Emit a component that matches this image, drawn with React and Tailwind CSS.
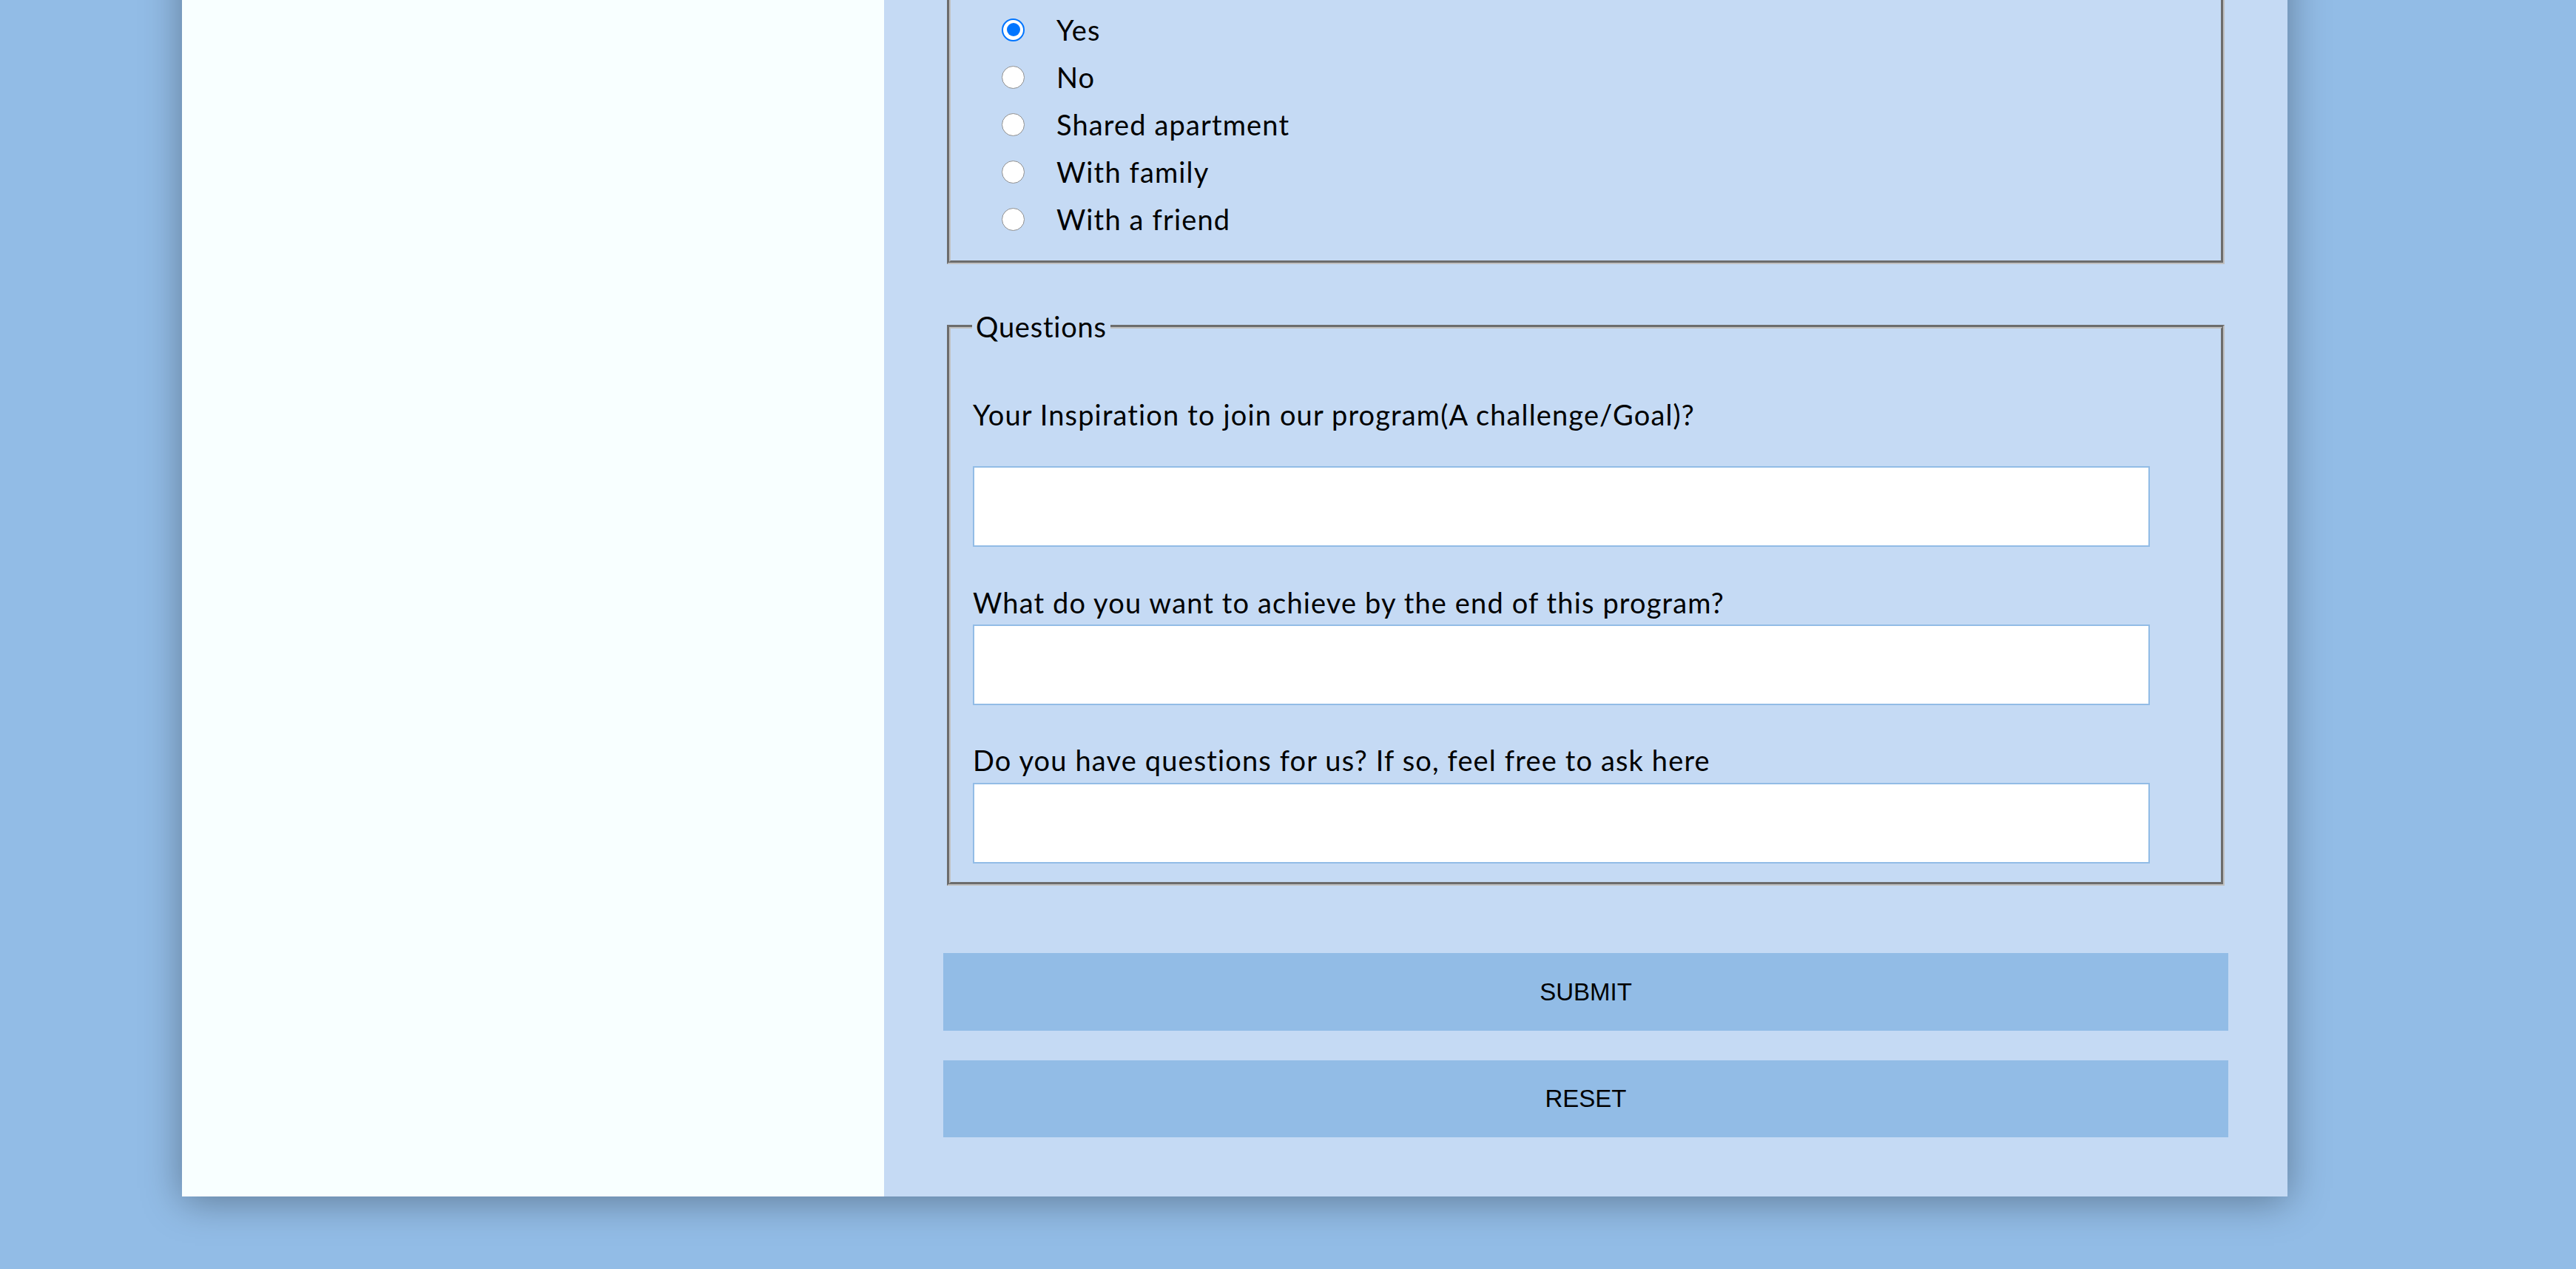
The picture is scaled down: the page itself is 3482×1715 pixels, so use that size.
import React, { useState } from "react";

const font = { fontFamily: "Lato, 'Noto Sans', sans-serif" };

const options = ["Yes", "No", "Shared apartment", "With family", "With a friend"];

function Radio({ checked }) {
  if (checked) {
    return (
      <span className="flex h-[31px] w-[31px] shrink-0 items-center justify-center rounded-full border-2 border-[#0075ff] bg-white">
        <span className="h-[18px] w-[18px] rounded-full bg-[#0075ff]" />
      </span>
    );
  }
  return <span className="h-[31px] w-[31px] shrink-0 rounded-full border border-[#8f8f8f] bg-white" />;
}

export default function App() {
  const [living, setLiving] = useState("Yes");

  const fieldsetCls =
    "mx-[5px] border-[5px] [border-style:groove] border-[#c0c0c0] pl-[30px] pr-[27px]";
  const labelCls = "block text-[38px] leading-[52px] tracking-[0.03em] text-black";
  const inputCls =
    "block h-[109px] w-[1591px] border-2 border-[#92bce6] bg-white px-4 text-[38px] outline-none";

  return (
    <div className="h-[1715px] w-full overflow-hidden bg-[#92bce6]" style={font}>
      <div className="-mt-[200px] ml-[246px] flex w-[2846px] shadow-[0_6px_50px_rgba(0,0,0,0.35)]">
        <div className="w-[949px] shrink-0 bg-[#f8ffff]" />

        <div className="flex-1 bg-[#c5daf4] px-[80px] pt-[80px] pb-[80px]">
          <form onSubmit={(e) => e.preventDefault()}>
            <fieldset className={fieldsetCls + " pt-[123px] pb-[24px]"}>
              {options.map((opt) => (
                <label
                  key={opt}
                  className="flex h-[64px] cursor-pointer items-center pl-[39px] text-[38px] tracking-[0.03em] text-black"
                  onClick={() => setLiving(opt)}
                >
                  <Radio checked={living === opt} />
                  <span className="ml-[43px]">{opt}</span>
                </label>
              ))}
            </fieldset>

            <fieldset className={fieldsetCls + " mt-[58px] pb-[25px]"}>
              <legend className="-ml-[1px] px-[5px] text-[38px] leading-[52px] tracking-[0.02em] text-black">
                Questions
              </legend>

              <label className={labelCls + " mt-[67px]"}>
                Your Inspiration to join our program(A challenge/Goal)?
              </label>
              <input className={inputCls + " mt-[44px]"} type="text" />

              <label className={labelCls + " mt-[49px]"}>
                What do you want to achieve by the end of this program?
              </label>
              <input className={inputCls + " mt-[4px]"} type="text" />

              <label className={labelCls + " mt-[48px]"}>
                Do you have questions for us? If so, feel free to ask here
              </label>
              <input className={inputCls + " mt-[5px]"} type="text" />
            </fieldset>

            <button
              type="submit"
              className="mt-[91px] block h-[105px] w-full bg-[#92bce6] text-[33px] text-black"
              style={{ fontFamily: "'Liberation Sans', Arial, sans-serif" }}
            >
              SUBMIT
            </button>
            <button
              type="reset"
              className="mt-[40px] block h-[104px] w-full bg-[#92bce6] text-[33px] text-black"
              style={{ fontFamily: "'Liberation Sans', Arial, sans-serif" }}
            >
              RESET
            </button>
          </form>
        </div>
      </div>
    </div>
  );
}
